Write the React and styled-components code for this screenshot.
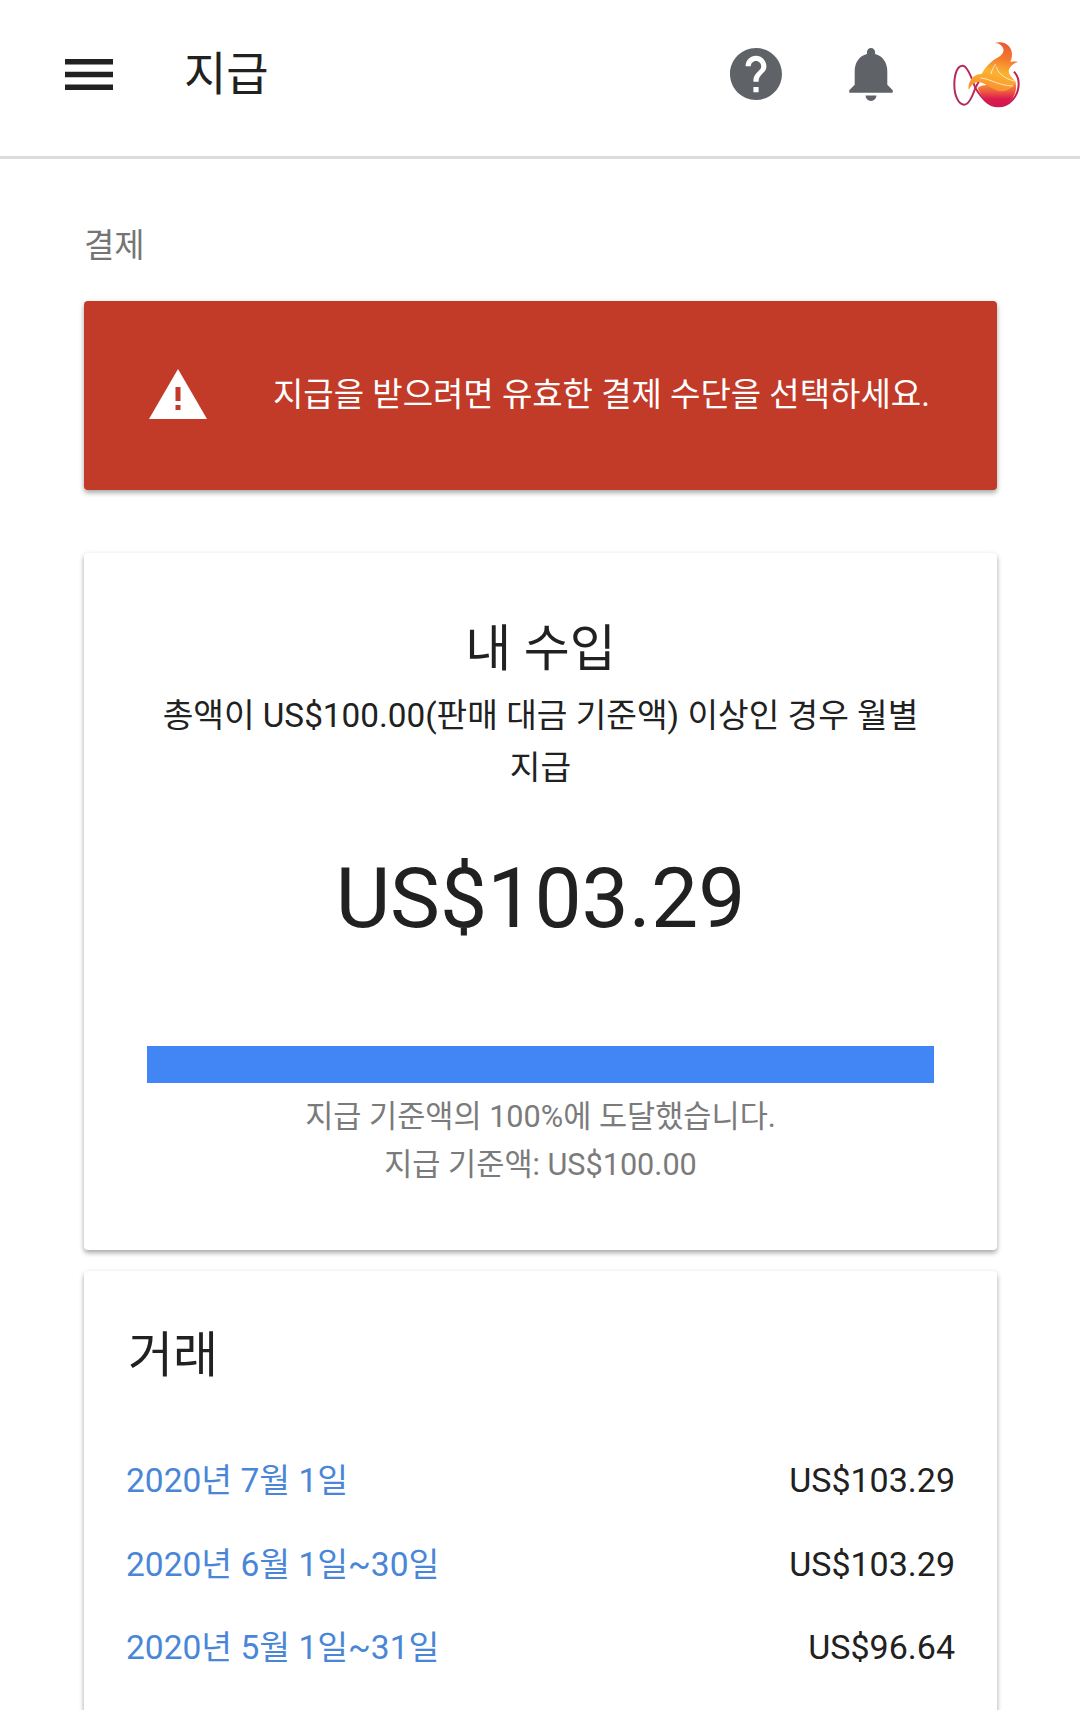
import React from 'react'
import styled, { createGlobalStyle } from 'styled-components'

const Global = createGlobalStyle`
  html, body {
    margin: 0;
    padding: 0;
    background: #fff;
  }
  body {
    font-family: Roboto, "Noto Sans CJK KR", sans-serif;
    height: 1710px;
    overflow: hidden;
  }
`

const Header = styled.header`
  height: 156px;
  border-bottom: 3px solid #dadce0;
  display: flex;
  align-items: center;
  padding: 0 57px 0 65px;
`

const Menu = styled.svg`
  width: 48px;
  height: 31px;
  flex: none;
  margin-bottom: 8px;
`

const Title = styled.h1`
  margin: 0 0 16px 71px;
  font-size: 46px;
  font-weight: 400;
  color: #212121;
  flex: 1;
`

const IconGroup = styled.div`
  display: flex;
  align-items: center;
  margin-bottom: 8px;
`

const HelpIcon = styled.svg`
  width: 52px;
  height: 52px;
  margin-right: 67px;
`

const BellIcon = styled.svg`
  width: 44px;
  height: 53px;
  margin-right: 54px;
`

const Logo = styled.svg`
  width: 76px;
  height: 72px;
`

const Main = styled.main`
  padding: 67px 83px 0 84px;
`

const Crumb = styled.div`
  font-size: 33px;
  line-height: 40px;
  color: #757575;
  margin-bottom: 35px;
`

const Card = styled.section`
  background: ${p => p.$bg || '#fff'};
  border-radius: 4px;
  box-shadow: 0 3px 5px rgba(0, 0, 0, 0.32), 0 0 6px rgba(0, 0, 0, 0.05);
`

const Alert = styled(Card)`
  height: 189px;
  box-sizing: border-box;
  display: flex;
  align-items: center;
  padding: 0 0 8px 65px;
  margin-bottom: 63px;
`

const AlertIcon = styled.svg`
  width: 58px;
  height: 50px;
  flex: none;
  margin: 4px 66px 0 0;
`

const AlertText = styled.div`
  font-size: 33px;
  color: #fff;
  white-space: nowrap;
`

const Earnings = styled(Card)`
  height: 697px;
  box-sizing: border-box;
  padding: 68px 63px 0;
  text-align: center;
  margin-bottom: 21px;
`

const EarnTitle = styled.h2`
  margin: 0;
  font-size: 50px;
  line-height: 56px;
  font-weight: 400;
  color: #212121;
`

const EarnDesc = styled.p`
  margin: 13px 0 0;
  font-size: 33.300px;
  line-height: 52px;
  color: #212121;
  word-break: keep-all;
`

const Amount = styled.div`
  margin-top: 57px;
  font-size: 84px;
  line-height: 96px;
  color: #212121;
`

const Bar = styled.div`
  margin-top: 99px;
  height: 37px;
  background: #4285f4;
`

const Note = styled.div`
  margin-top: 10px;
  font-size: 30.600px;
  line-height: 48px;
  color: #7b7b7b;
`

const Transactions = styled(Card)`
  padding: 55px 42px 0;
  height: 500px;
  box-sizing: border-box;
`

const TransTitle = styled.h2`
  margin: 0 0 0 2px;
  font-size: 49px;
  line-height: 60px;
  font-weight: 400;
  color: #212121;
`

const Rows = styled.div`
  margin-top: 69px;
  display: flex;
  flex-direction: column;
`

const Row = styled.div`
  height: 83.500px;
  display: flex;
  align-items: baseline;
  justify-content: space-between;
`

const DateLink = styled.a`
  font-size: 33.500px;
  line-height: 50px;
  color: #4a86d8;
`

const Price = styled.span`
  font-size: 34px;
  line-height: 50px;
  color: #212121;
`

const rows = [
  ['2020년 7월 1일', 'US$103.29'],
  ['2020년 6월 1일~30일', 'US$103.29'],
  ['2020년 5월 1일~31일', 'US$96.64'],
]

export default function App() {
  return (
    <>
      <Global />
      <Header>
        <Menu viewBox="0 0 48 31">
          <path d="M0 0h48v5.500H0zM0 12.750h48v5.500H0zM0 25.500h48v5.500H0z" fill="#212121" />
        </Menu>
        <Title>지급</Title>
        <IconGroup>
          <HelpIcon viewBox="2 2 20 20">
            <path
              fill="#5f6368"
              d="M12 2C6.480 2 2 6.480 2 12s4.480 10 10 10 10-4.480 10-10S17.520 2 12 2zm1 17h-2v-2h2v2zm2.070-7.750l-.9.920C13.450 12.900 13 13.500 13 15h-2v-.5c0-1.100.450-2.100 1.170-2.830l1.240-1.260c.370-.360.590-.860.590-1.410 0-1.100-.9-2-2-2s-2 .9-2 2H8c0-2.210 1.790-4 4-4s4 1.790 4 4c0 .880-.360 1.680-.930 2.250z"
            />
          </HelpIcon>
          <BellIcon viewBox="4 2.500 16 19.500">
            <path
              fill="#5f6368"
              d="M12 22c1.100 0 2-.9 2-2h-4c0 1.100.890 2 2 2zm6-6v-5c0-3.070-1.640-5.640-4.500-6.320V4c0-.830-.670-1.500-1.500-1.500s-1.500.670-1.500 1.500v.680C7.630 5.360 6 7.920 6 11v5l-2 2v1h16v-1l-2-2z"
            />
          </BellIcon>
          <Logo viewBox="0 0 228 216">
            <defs>
              <linearGradient id="flame" x1="0.6" y1="0" x2="0.4" y2="1">
                <stop offset="0" stopColor="#ec5a33" />
                <stop offset="0.3" stopColor="#f47a2e" />
                <stop offset="0.6" stopColor="#fbb32f" />
                <stop offset="1" stopColor="#f98d2f" />
              </linearGradient>
              <linearGradient id="bowl" x1="0" y1="0" x2="0" y2="1">
                <stop offset="0" stopColor="#f8a533" />
                <stop offset="0.4" stopColor="#ef5a3e" />
                <stop offset="0.7" stopColor="#dc1c50" />
                <stop offset="1" stopColor="#d3164f" />
              </linearGradient>
            </defs>
            <path
              d="M85 150C72 112 60 84 48 83 30 82 22 110 22 140c0 32 12 60 30 60 14 0 24-24 33-50z"
              fill="none"
              stroke="#b52a5c"
              strokeWidth="6"
            />
            <path
              d="M85 150c18 28 38 55 68 55 34 0 62-30 62-68 0-14-5-26-14-36M85 150c8-16 18-32 32-46"
              fill="none"
              stroke="#c2214f"
              strokeWidth="6"
            />
            <path
              d="M92 150C110 130 170 150 205 130 215 165 190 205 152 205 125 205 105 180 92 150z"
              fill="url(#bowl)"
            />
            <path
              d="M65 156C62 130 78 108 104 108 112 92 128 72 150 60 168 50 174 38 166 26 160 18 152 15 143 15 170 6 194 22 195 48 195 56 194 62 190 72 198 70 206 70 213 72 202 75 192 82 186 94 182 104 192 118 206 130 198 152 176 164 152 158 132 152 112 132 92 132 80 134 72 142 65 156z"
              fill="url(#flame)"
            />
            <path
              d="M100 120c30 2 52 22 98 24M148 86c4 18 22 36 58 44M146 78c-6 10-12 18-14 30"
              fill="none"
              stroke="#fff"
              strokeOpacity="0.85"
              strokeWidth="2.500"
            />
          </Logo>
        </IconGroup>
      </Header>
      <Main>
        <Crumb>결제</Crumb>
        <Alert $bg="#c23a28">
          <AlertIcon viewBox="0 0 58 50">
            <path fill="#fff" d="M29 0l29 50H0z" />
            <path fill="#c23a28" d="M26.500 18h5v14h-5zM26.500 36h5v5h-5z" />
          </AlertIcon>
          <AlertText>지급을 받으려면 유효한 결제 수단을 선택하세요.</AlertText>
        </Alert>
        <Earnings>
          <EarnTitle>내 수입</EarnTitle>
          <EarnDesc>총액이 US$100.00(판매 대금 기준액) 이상인 경우 월별 지급</EarnDesc>
          <Amount>US$103.29</Amount>
          <Bar />
          <Note>
            지급 기준액의 100%에 도달했습니다.
            <br />
            지급 기준액: US$100.00
          </Note>
        </Earnings>
        <Transactions>
          <TransTitle>거래</TransTitle>
          <Rows>
            {rows.map(([date, price]) => (
              <Row key={date}>
                <DateLink>{date}</DateLink>
                <Price>{price}</Price>
              </Row>
            ))}
          </Rows>
        </Transactions>
      </Main>
    </>
  )
}
